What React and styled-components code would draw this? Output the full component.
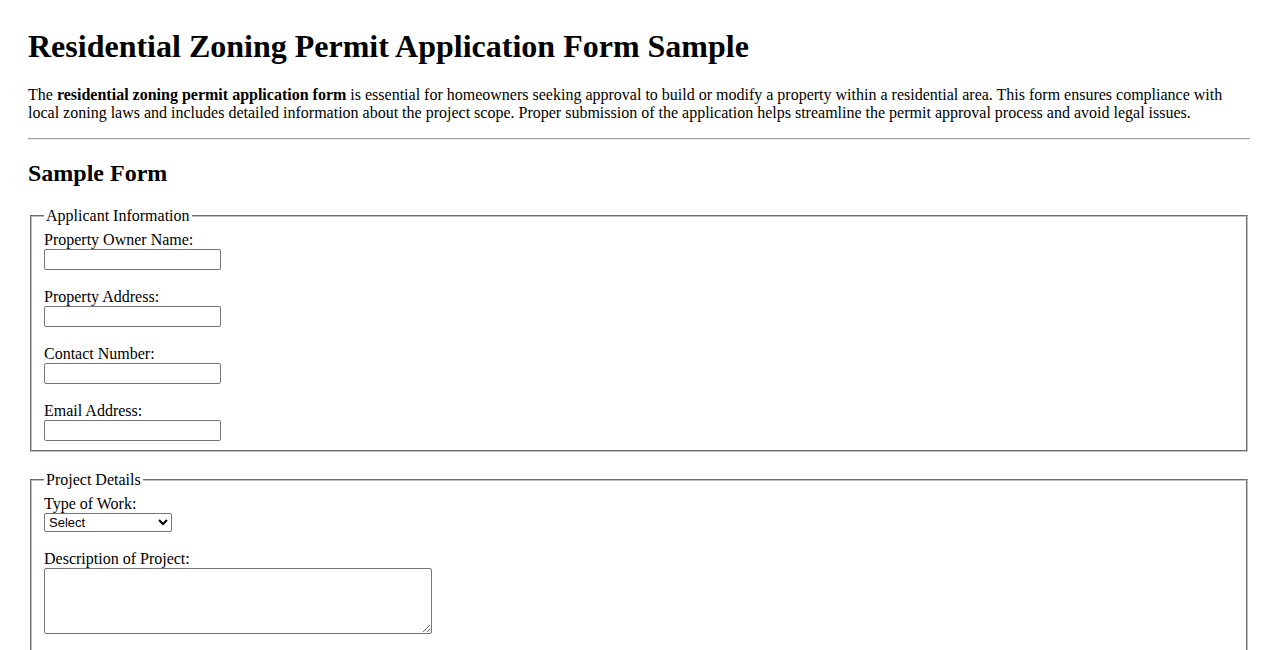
import React from 'react';
import styled, { createGlobalStyle } from 'styled-components';

const GlobalStyle = createGlobalStyle`
  body {
    margin: 8px;
    background: #fff;
    color: #000;
    font-family: "Liberation Serif", "Times New Roman", serif;
    font-size: 16px;
  }
`;

const App = () => {
  return (
    <Page>
      <GlobalStyle />
      <Title>Residential Zoning Permit Application Form Sample</Title>
      <Intro>
        The <strong>residential zoning permit application form</strong> is essential for homeowners
        seeking approval to build or modify a property within a residential area. This form ensures
        compliance with local zoning laws and includes detailed information about the project scope.
        Proper submission of the application helps streamline the permit approval process and avoid
        legal issues.
      </Intro>
      <Divider />
      <SectionTitle>Sample Form</SectionTitle>

      <form>
        <Fieldset>
          <Legend>Applicant Information</Legend>
          <Field>
            <Label htmlFor="owner">Property Owner Name:</Label>
            <TextInput id="owner" type="text" />
          </Field>
          <Field>
            <Label htmlFor="address">Property Address:</Label>
            <TextInput id="address" type="text" />
          </Field>
          <Field>
            <Label htmlFor="phone">Contact Number:</Label>
            <TextInput id="phone" type="tel" />
          </Field>
          <Field $last>
            <Label htmlFor="email">Email Address:</Label>
            <TextInput id="email" type="email" />
          </Field>
        </Fieldset>

        <Fieldset>
          <Legend>Project Details</Legend>
          <Field>
            <Label htmlFor="work">Type of Work:</Label>
            <Select id="work" defaultValue="">
              <option value="">Select</option>
              <option value="new">New Construction</option>
              <option value="addition">Addition</option>
              <option value="renovation">Renovation</option>
            </Select>
          </Field>
          <Field>
            <Label htmlFor="desc">Description of Project:</Label>
            <TextArea id="desc" />
          </Field>
          <Field $last>
            <Label htmlFor="cost">Estimated Cost:</Label>
            <TextInput id="cost" type="text" />
          </Field>
        </Fieldset>
      </form>
    </Page>
  );
};

const Page = styled.div`
  padding: 20px 20px 40px;
`;

const Title = styled.h1`
  font-size: 32px;
  font-weight: bold;
  line-height: 37px;
  margin: 0 0 21px;
`;

const Intro = styled.p`
  margin: 0 0 16px;
  line-height: 18px;
`;

const Divider = styled.hr`
  margin: 0;
  border: none;
  border-top: 1px solid #a0a0a0;
  border-bottom: 1px solid #eeeeee;
`;

const SectionTitle = styled.h2`
  font-size: 24px;
  font-weight: bold;
  line-height: 28px;
  margin: 19px 0 20px;
`;

const Fieldset = styled.fieldset`
  margin: 0 2px 19px;
  padding: 6px 12px 9px;
  border: 2px groove #c0c0c0;
`;

const Legend = styled.legend`
  padding: 0 2px;
  line-height: 18px;
`;

const Field = styled.div`
  display: flex;
  flex-direction: column;
  align-items: flex-start;
  margin-bottom: ${(p) => (p.$last ? '0' : '18px')};
`;

const Label = styled.label`
  line-height: 18px;
`;

const TextInput = styled.input`
  box-sizing: border-box;
  width: 177px;
  height: 21px;
  margin: 0;
  padding: 1px 2px;
  border: 1px solid #767676;
  border-radius: 2px;
  font-family: "Liberation Sans", Arial, sans-serif;
  font-size: 13px;
`;

const Select = styled.select`
  box-sizing: border-box;
  width: 128px;
  height: 19px;
  margin: 0;
  border: 1px solid #767676;
  border-radius: 2px;
  font-family: "Liberation Sans", Arial, sans-serif;
  font-size: 13px;
  background: #fff;
  color: #000;
`;

const TextArea = styled.textarea`
  box-sizing: border-box;
  width: 388px;
  height: 66px;
  margin: 0;
  padding: 2px;
  border: 1px solid #767676;
  border-radius: 2px;
  font-family: "Liberation Mono", monospace;
  font-size: 13px;
`;

export default App;
